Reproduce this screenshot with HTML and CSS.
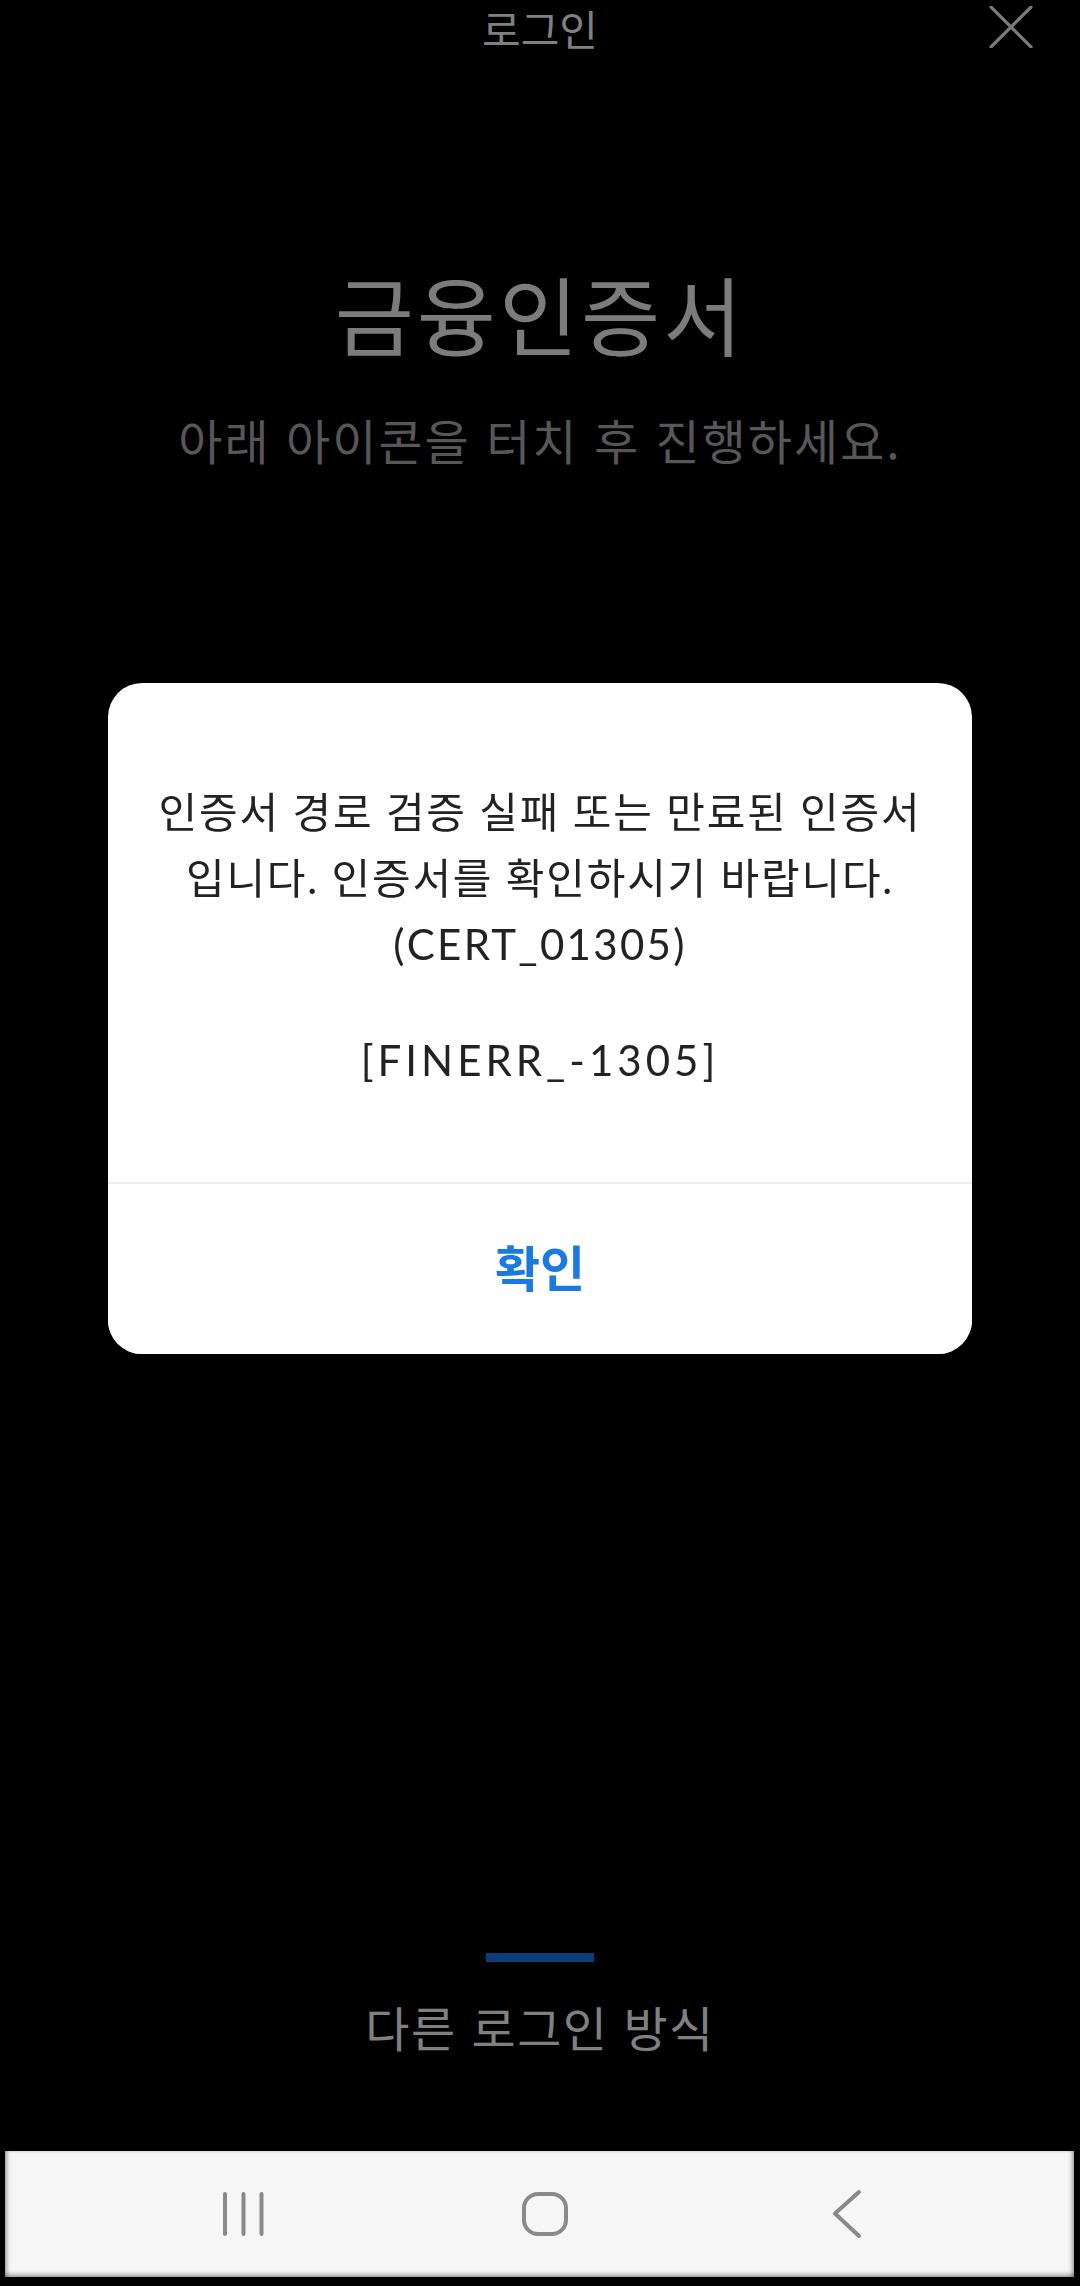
FILE: index.html
```html
<!DOCTYPE html>
<html lang="ko">
<head>
  <meta charset="UTF-8">
  <title>로그인</title>
  <link rel="stylesheet" href="styles.css">
</head>
<body>
  <div class="page">
    <header class="topbar">
      <span></span>
      <h1 class="topbar-title">로그인</h1>
      <button class="close" aria-label="닫기">
        <svg width="44" height="42" viewBox="0 0 44 42">
          <path d="M2 1 L42 41 M42 1 L2 41" stroke="#7a7a7a" stroke-width="3.2" stroke-linecap="round" fill="none"/>
        </svg>
      </button>
    </header>

    <section class="intro">
      <h2 class="intro-title">금융인증서</h2>
      <p class="intro-sub">아래 아이콘을 터치 후 진행하세요.</p>
    </section>

    <div class="spacer"></div>

    <section class="other">
      <div class="other-bar"></div>
      <p class="other-text">다른 로그인 방식</p>
    </section>

    <nav class="navbar">
      <span class="nav-slot">
        <svg width="44" height="46" viewBox="0 0 44 46">
          <path d="M4 3 V43 M22.5 3 V43 M40.5 3 V43" stroke="#8a8a8a" stroke-width="4" stroke-linecap="round" fill="none"/>
        </svg>
      </span>
      <span class="nav-slot">
        <svg width="48" height="46" viewBox="0 0 48 46">
          <rect x="3" y="3" width="42" height="40" rx="14" ry="14" stroke="#8a8a8a" stroke-width="4" fill="none"/>
        </svg>
      </span>
      <span class="nav-slot">
        <svg width="32" height="50" viewBox="0 0 32 50">
          <path d="M28 3 L4 24.5 L28 47" stroke="#8a8a8a" stroke-width="4" stroke-linecap="round" stroke-linejoin="round" fill="none"/>
        </svg>
      </span>
    </nav>
  </div>

  <div class="dim">
    <div class="dialog">
      <div class="dialog-body">
        <p class="dialog-msg">인증서 경로 검증 실패 또는 만료된 인증서<br>입니다. 인증서를 확인하시기 바랍니다.<br><span class="latin">(CERT_01305)</span></p>
        <p class="dialog-code">[FINERR_-1305]</p>
      </div>
      <button class="dialog-btn">확인</button>
    </div>
  </div>
</body>
</html>
```

FILE: styles.css
```css
body {
  margin: 0;
  background: #000;
  font-family: "Noto Sans CJK KR", "Noto Sans", sans-serif;
  width: 1080px;
  height: 2286px;
  overflow: hidden;
}
.page {
  height: 2286px;
  display: flex;
  flex-direction: column;
}
.topbar {
  height: 56px;
  display: grid;
  grid-template-columns: 1fr auto 1fr;
  align-items: center;
}
.topbar-title {
  margin: 0;
  font-size: 42px;
  line-height: 56px;
  font-weight: 400;
  color: #808080;
}
.close {
  justify-self: end;
  margin-right: 47px;
  margin-top: -3px;
  padding: 0;
  border: none;
  background: none;
  display: flex;
}
.intro {
  text-align: center;
}
.intro-title {
  margin: 207px 0 0;
  font-size: 86px;
  line-height: 100px;
  font-weight: 400;
  letter-spacing: 3px;
  color: #7c7c7c;
}
.intro-sub {
  margin: 46px 0 0;
  font-size: 48px;
  line-height: 60px;
  letter-spacing: 2px;
  color: #575757;
}
.spacer {
  flex: 1;
}
.other {
  display: flex;
  flex-direction: column;
  align-items: center;
  margin-bottom: 95px;
}
.other-bar {
  width: 108px;
  height: 9px;
  background: #0b3d78;
}
.other-text {
  margin: 34px 0 0;
  font-size: 48px;
  line-height: 60px;
  letter-spacing: 1.5px;
  color: #808080;
}
.navbar {
  height: 126px;
  margin: 0 6px 9px 5px;
  background: #f6f6f6;
  box-shadow: inset 4px 0 4px -2px rgba(0,0,0,0.35), inset -4px 0 4px -2px rgba(0,0,0,0.35), inset 0 -5px 4px -2px rgba(0,0,0,0.3);
  display: flex;
  justify-content: center;
  align-items: center;
  padding-left: 10px;
}
.nav-slot {
  width: 302px;
  display: flex;
  justify-content: center;
}

.dim {
  position: fixed;
  top: 0;
  left: 0;
  right: 0;
  bottom: 0;
  display: flex;
  justify-content: center;
  align-items: flex-start;
  padding-top: 683px;
}
.dialog {
  width: 864px;
  background: #fff;
  border-radius: 34px;
  overflow: hidden;
}
.dialog-body {
  padding: 96px 20px 89px;
  text-align: center;
  color: #222;
  border-bottom: 2px solid #ededed;
}
.dialog-msg {
  margin: 0;
  font-family: "Lato", "Noto Sans CJK KR", sans-serif;
  font-size: 42px;
  line-height: 66px;
  letter-spacing: 1.8px;
}
.latin {
  letter-spacing: 2.3px;
}
.dialog-code {
  margin: 50px 0 0;
  font-family: "Lato", "Noto Sans CJK KR", sans-serif;
  font-size: 42px;
  line-height: 66px;
  letter-spacing: 4px;
}
.dialog-btn {
  display: block;
  width: 100%;
  height: 170px;
  border: none;
  background: #fff;
  font-family: "Noto Sans CJK KR", sans-serif;
  font-size: 49px;
  font-weight: 700;
  color: #1b7ae2;
  padding: 0 0 8px;
}
```
